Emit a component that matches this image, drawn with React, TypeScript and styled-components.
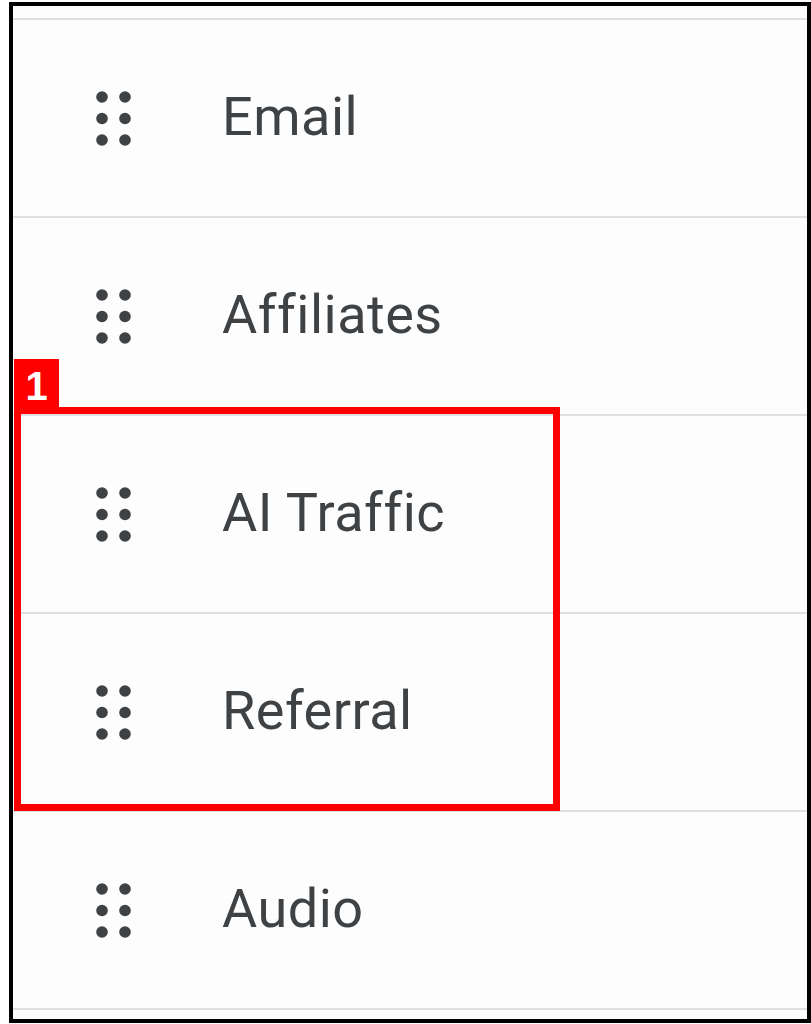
import React from "react";
import styled, { createGlobalStyle } from "styled-components";

const GlobalStyle = createGlobalStyle`
  html, body {
    margin: 0;
    padding: 0;
    background: #ffffff;
  }
  body {
    font-family: Roboto, "Noto Sans", "Liberation Sans", sans-serif;
  }
`;

const Frame = styled.div`
  position: relative;
  box-sizing: border-box;
  margin: 2px 0 0 9px;
  width: 802px;
  height: 1021px;
  border: 4px solid #000;
  background: #fdfdfd;
  padding-top: 12px;
  overflow: hidden;
`;

const List = styled.ul`
  list-style: none;
  margin: 0;
  padding: 0;
  border-top: 2px solid #dfe0e3;
`;

const Row = styled.li`
  box-sizing: border-box;
  height: 198px;
  display: flex;
  align-items: center;
  padding-left: 83px;
  border-bottom: 2px solid #dfe0e3;
  gap: 91px;
`;

const Label = styled.span`
  font-family: Roboto, "Noto Sans", "Liberation Sans", sans-serif;
  font-size: 54px;
  font-weight: 400;
  color: #3f4245;
  line-height: 1;
  letter-spacing: 0.5px;
  margin-top: -3px;
`;

const Annotation = styled.div`
  position: absolute;
  left: 1px;
  top: 401px;
  width: 546px;
  height: 404px;
  box-sizing: border-box;
  border: 7px solid #ff0000;
  pointer-events: none;
`;

const Badge = styled.div`
  position: absolute;
  left: 1px;
  top: 353px;
  width: 45px;
  height: 48px;
  background: #ff0000;
  color: #ffffff;
  display: flex;
  align-items: center;
  justify-content: center;
  font-family: "Liberation Sans", Arial, sans-serif;
  font-weight: 700;
  font-size: 40px;
  line-height: 1;
  padding-top: 6px;
  box-sizing: border-box;
`;

const Grip = () => (
  <svg width="35" height="55" viewBox="0 0 35 55" aria-hidden="true">
    {[6, 27.5, 49].map((cy) =>
      [6, 29].map((cx) => (
        <circle key={`${cx}-${cy}`} cx={cx} cy={cy} r="5.8" fill="#3f4245" />
      ))
    )}
  </svg>
);

const items = ["Email", "Affiliates", "AI Traffic", "Referral", "Audio"];

export default function App() {
  return (
    <>
      <GlobalStyle />
      <Frame>
        <List>
          {items.map((label) => (
            <Row key={label}>
              <Grip />
              <Label>{label}</Label>
            </Row>
          ))}
        </List>
        <Badge>1</Badge>
        <Annotation />
      </Frame>
    </>
  );
}
